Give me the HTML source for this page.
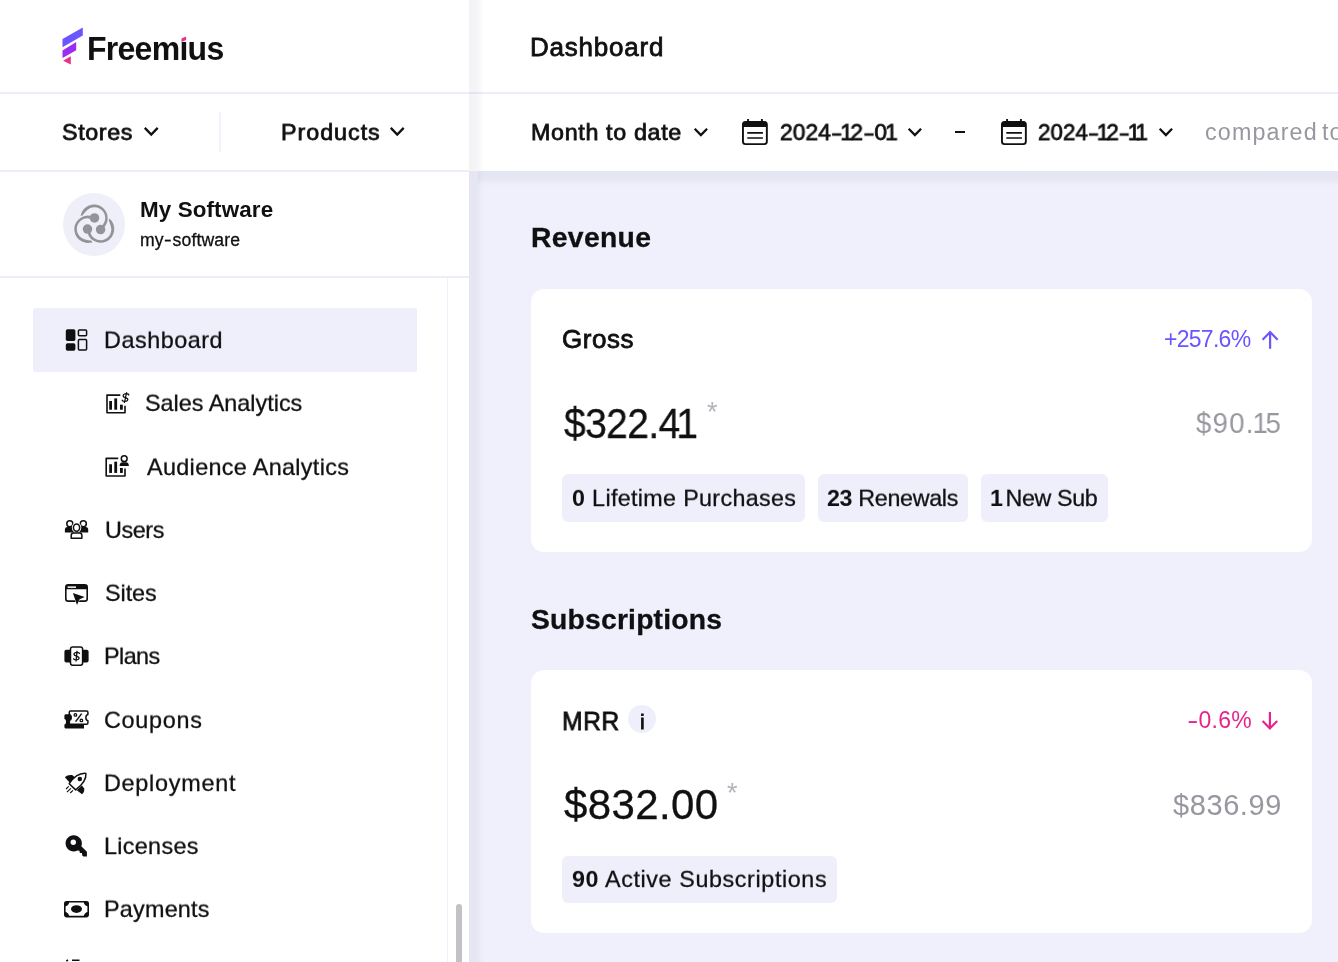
<!DOCTYPE html>
<html lang="en">
<head>
<meta charset="utf-8">
<title>Freemius Dashboard</title>
<style>
*{box-sizing:border-box;margin:0;padding:0}
html,body{width:1338px;height:962px;overflow:hidden;background:#fff}
body{font-family:"Liberation Sans",sans-serif;color:#101012;position:relative}
.abs{position:absolute}
.t{position:absolute;line-height:1;white-space:nowrap;color:#101012;transform-origin:0 50%;transform:skewX(0.03deg);will-change:transform}
.med{-webkit-text-stroke:0.8px currentColor}
.lt{-webkit-text-stroke:0.3px currentColor}
.b{font-weight:bold}
.hb{-webkit-text-stroke:0.3px currentColor}
.sb{font-weight:bold;-webkit-text-stroke:0 currentColor}
.n1{margin:0 -0.13em 0 -0.09em}
.hy{display:inline-block;transform:scaleX(1.45);margin:0 0.08em}
#main{position:absolute;left:469px;top:0;width:869px;height:962px;background:#eff0fb;overflow:hidden}
#mainhead{position:absolute;left:0;top:0;width:869px;height:171px;background:#fff}
#headshadow{position:absolute;left:478px;top:171px;width:860px;height:15px;background:linear-gradient(180deg,rgba(60,60,100,.058) 0,rgba(60,60,100,.052) 50%,rgba(60,60,100,.025) 75%,rgba(60,60,100,0) 100%)}
#sideshadow{position:absolute;left:0;top:0;width:15px;height:962px;background:linear-gradient(90deg,rgba(60,60,100,.058) 0,rgba(60,60,100,.052) 55%,rgba(60,60,100,.025) 78%,rgba(60,60,100,0) 100%)}
.hline{position:absolute;height:1.5px;background:#ededf9}
.vline{position:absolute;width:1.5px;background:#ececf8}
.card{position:absolute;background:#fff;border-radius:13px}
.chip{position:absolute;background:#efeffb;border-radius:6px;height:48px}
svg{position:absolute;overflow:visible}
.ic{fill:none;stroke:#101012;stroke-width:1.6;stroke-linejoin:round;stroke-linecap:butt}
.fl{fill:#101012;stroke:none}
</style>
</head>
<body>
<!-- SIDEBAR -->
<div id="side" class="abs" style="left:0;top:0;width:469px;height:962px;background:#fff;overflow:hidden">
  <svg style="left:0;top:0" width="240" height="92" viewBox="0 0 240 92">
    <polygon points="62.5,39.1 82.8,27.5 82.8,35.5 62.5,47.2" fill="#6a55ff"/>
    <polygon points="62.5,50.5 76.2,42.1 76.2,50.2 62.5,58" fill="#9a2df0"/>
    <polygon points="63.1,60.7 70.8,56.2 70.8,64.5" fill="#e8308c"/>
  </svg>
  <div class="t b" id="logo" style="left:87.10px;top:32.90px;font-size:32px;letter-spacing:-0.729px;color:#101012;transform-origin:0 27.10px;transform:scale(1,1.035) skewX(0.03deg)">Freemius</div>
  <div class="abs" style="left:180px;top:34px;width:8px;height:8.2px;background:#fff"></div>
  <svg style="left:180px;top:34px" width="8" height="9" viewBox="180 34 8 9"><polygon points="181.5,38.4 186.1,36.5 186.1,40.1 181.5,42.0" fill="#e8308c"/></svg>
  <div class="hline" style="left:0;top:92px;width:469px"></div>

  <div class="t med" id="stores" style="left:62.20px;top:121.35px;font-size:23.3px;letter-spacing:0.6px;color:#101012;transform-origin:0 18.65px;transform:scale(1,0.93) skewX(0.03deg)">Stores</div>
  <svg style="left:143.7px;top:126.9px" width="14.5" height="9" viewBox="0 0 14.5 9"><path d="M0.8 0.9 L7.25 7.5 L13.7 0.9" fill="none" stroke="#101012" stroke-width="2.3"/></svg>
  <div class="vline" style="left:219.2px;top:112px;height:40px;background:#f2f2fc"></div>
  <div class="t med" id="products" style="left:281.30px;top:121.35px;font-size:23.3px;letter-spacing:0.971px;color:#101012;transform-origin:0 18.65px;transform:scale(1,0.93) skewX(0.03deg)">Products</div>
  <svg style="left:390.4px;top:126.9px" width="14.5" height="9" viewBox="0 0 14.5 9"><path d="M0.8 0.9 L7.25 7.5 L13.7 0.9" fill="none" stroke="#101012" stroke-width="2.3"/></svg>
  <div class="hline" style="left:0;top:170px;width:469px"></div>

  <div class="abs" style="left:62.5px;top:193px;width:62.5px;height:62.5px;border-radius:50%;background:#efeffa"></div>
  <svg style="left:62.5px;top:193px" width="62.5" height="62.5" viewBox="62.5 193 62.5 62.5" ><g fill="#939399"><circle cx="94.00" cy="217.94" r="4.75"/><path d="M100.43 230.04 A13.7 13.7 0 1 0 80.07 215.73 L82.07 215.40 Q83.71 213.03 86.05 210.78 A10.7 10.7 0 1 1 99.02 227.39 Z"/><circle cx="100.10" cy="229.54" r="4.75"/><path d="M86.41 229.06 A13.7 13.7 0 1 0 108.97 218.58 L108.26 220.47 Q109.49 223.08 110.27 226.23 A10.7 10.7 0 1 1 89.40 229.17 Z"/><circle cx="87.00" cy="229.02" r="4.75"/><path d="M94.26 217.40 A13.7 13.7 0 1 0 92.06 242.18 L90.77 240.62 Q87.90 240.39 84.78 239.49 A10.7 10.7 0 1 1 92.67 219.95 Z"/></g></svg>
  <div class="t b" id="prodname" style="left:140.40px;top:198.90px;font-size:22.4px;letter-spacing:0.12px;color:#101012">My Software</div>
  <div class="t lt" id="prodslug" style="left:140.40px;top:231.80px;font-size:17.6px;letter-spacing:0.14px;color:#101012">my<span class="hy" style="transform:scaleX(1.3)">-</span>software</div>
  <div class="hline" style="left:0;top:276px;width:469px"></div>
  <div class="vline" style="left:447.3px;top:277px;height:700px;width:1.2px;background:#f0f0fa"></div>

  <div class="abs" style="left:33px;top:308.2px;width:383.8px;height:63.5px;background:#efeffb;border-radius:2.5px"></div>
  <svg style="left:64px;top:328px" width="26" height="24" viewBox="64 328 26 24" ><rect class="fl" x="65.8" y="329.3" width="9.6" height="11.7" rx="1.7"/><rect class="fl" x="65.8" y="343.3" width="9.6" height="7.4" rx="1.7"/><rect class="ic" x="78.4" y="330.1" width="8.2" height="5.7" rx="1" style="stroke-width:1.5"/><rect class="ic" x="78.4" y="339.6" width="8.2" height="10.3" rx="1" style="stroke-width:1.5"/></svg><div class="t lt" id="m0" style="left:104.00px;top:329.40px;font-size:23.4px;letter-spacing:0.525px;color:#101012;transform-origin:0 18.60px;transform:scale(1,0.96) skewX(0.03deg)">Dashboard</div>
  <svg style="left:104px;top:390px" width="28" height="26" viewBox="104 390 28 26" ><path class="ic" d="M120.3 395.1 H107 V412.8 H125 V405.8" style="stroke-linejoin:round"/><rect class="fl" x="109.2" y="401.0" width="2.8" height="8.7"/><rect class="fl" x="114.3" y="398.4" width="2.8" height="11.3"/><rect class="fl" x="120.0" y="404.7" width="2.8" height="5.0"/><path d="M128.31 395.46 C128.31 393.13 122.69 393.13 122.69 395.66 C122.69 397.79 128.31 397.41 128.31 399.54 C128.31 402.07 122.69 402.07 122.69 399.74 M125.50 392.20 V403.00" fill="none" stroke="#101012" stroke-width="1.25" stroke-linecap="butt" transform="translate(125.5 397.6) skewX(-12) translate(-125.5 -397.6)"/></svg><div class="t lt" id="m1" style="left:145.40px;top:391.70px;font-size:23.4px;letter-spacing:-0.0px;color:#101012;transform-origin:0 19.30px;transform:scale(1,0.96) skewX(0.03deg)">Sales Analytics</div>
  <svg style="left:104px;top:453px" width="28" height="26" viewBox="104 453 28 26" ><path class="ic" d="M118.2 458.35 H106.2 V476.05 H125 V468.45" style="stroke-linejoin:round"/><rect class="fl" x="109.2" y="464.25" width="2.8" height="8.7"/><rect class="fl" x="114.3" y="461.65" width="2.8" height="11.3"/><rect class="fl" x="120.0" y="467.95" width="2.8" height="5.0"/><circle class="ic" cx="124.2" cy="458.7" r="2.9" style="stroke-width:1.5"/><path class="fl" d="M119.6 466 C119.6 463.2 121 462.2 122.4 462.2 H126 C127.4 462.2 128.9 463.2 128.9 466 Z"/></svg><div class="t lt" id="m2" style="left:146.80px;top:456.00px;font-size:23.4px;letter-spacing:0.329px;color:#101012;transform-origin:0 19.00px;transform:scale(1,0.96) skewX(0.03deg)">Audience Analytics</div>
  <svg style="left:63px;top:519px" width="28" height="22" viewBox="63 519 28 22" ><path class="fl" d="M64.9 532.4 V529.6 C64.9 527.9 66.2 527.1 67.4 527.1 H85.7 C86.9 527.1 88.2 527.9 88.2 529.6 V532.4 Z"/><circle cx="69.8" cy="523.7" r="3.0" fill="#fff" stroke="#101012" stroke-width="1.5"/><circle cx="83.3" cy="523.7" r="3.0" fill="#fff" stroke="#101012" stroke-width="1.5"/><ellipse cx="76.55" cy="527.5" rx="4.7" ry="5.3" fill="#fff"/><ellipse cx="76.55" cy="527.6" rx="3.1" ry="3.7" fill="#fff" stroke="#101012" stroke-width="1.5"/><path d="M71.2 538.2 V535.6 C71.2 533.9 72.3 533.0 73.5 533.0 H79.6 C80.8 533.0 81.9 533.9 81.9 535.6 V538.2 Z" fill="#fff" stroke="#101012" stroke-width="1.5" stroke-linejoin="round"/></svg><div class="t lt" id="m3" style="left:105.00px;top:519.20px;font-size:23.4px;letter-spacing:-0.425px;color:#101012;transform-origin:0 18.80px;transform:scale(1,0.96) skewX(0.03deg)">Users</div>
  <svg style="left:64px;top:583px" width="26" height="24" viewBox="64 583 26 24" ><rect class="ic" x="65.8" y="584.9" width="21.4" height="16.2" rx="2.4" style="stroke-width:1.6"/><path class="fl" d="M65.8 589.2 V587 C65.8 585.6 66.8 584.9 68 584.9 H85 C86.2 584.9 87.2 585.6 87.2 587 V589.2 Z"/><rect x="67.6" y="586.4" width="8.4" height="1.5" fill="#fff"/><path d="M72.9 593 L84.7 597.1 L79.6 599.2 L77 604.9 Z" fill="#101012" stroke="#fff" stroke-width="0.9" stroke-linejoin="round" paint-order="stroke"/></svg><div class="t lt" id="m4" style="left:105.00px;top:582.40px;font-size:23.4px;letter-spacing:-0.075px;color:#101012;transform-origin:0 18.60px;transform:scale(1,0.96) skewX(0.03deg)">Sites</div>
  <svg style="left:63px;top:645px" width="28" height="22" viewBox="63 645 28 22" ><rect class="fl" x="64.4" y="649.8" width="24.2" height="12.6" rx="2"/><rect x="70.5" y="646.9" width="12.1" height="18.4" rx="2.2" fill="#fff" stroke="#101012" stroke-width="1.5"/><path d="M79.31 654.00 C79.31 651.71 73.79 651.71 73.79 654.19 C73.79 656.29 79.31 655.91 79.31 658.01 C79.31 660.49 73.79 660.49 73.79 658.20 M76.55 650.80 V661.40" fill="none" stroke="#101012" stroke-width="1.3" stroke-linecap="butt" transform="translate(76.55 656.1) skewX(-6) translate(-76.55 -656.1)"/></svg><div class="t lt" id="m5" style="left:104.40px;top:644.70px;font-size:23.4px;letter-spacing:-0.575px;color:#101012;transform-origin:0 19.30px;transform:scale(1,0.96) skewX(0.03deg)">Plans</div>
  <svg style="left:63px;top:709px" width="28" height="22" viewBox="63 709 28 22" ><path class="fl" d="M66 714.2 H84 V728.5 H66 C65 728.5 64.4 727.8 64.4 727 V724.6 C66.6 724.3 66.6 719.3 64.4 719 V715.7 C64.4 714.9 65 714.2 66 714.2 Z"/><path d="M70.4 710.9 H86.6 C87.4 710.9 87.9 711.4 87.9 712.2 V714.6 C85.2 715.3 85.2 720.1 87.9 720.8 V723 C87.9 723.8 87.4 724.3 86.6 724.3 H69.3 V720.6 C71.9 719.9 71.9 715.2 69.3 714.5 V712.2 C69.3 711.4 69.7 710.9 70.4 710.9 Z" fill="#fff" stroke="#101012" stroke-width="1.5" stroke-linejoin="round"/><path class="fl" d="M68.6 714.3 C72.6 714.6 72.6 720.6 68.6 720.9 Z"/><path d="M81.7 713.6 L75.6 721.6" fill="none" stroke="#101012" stroke-width="1.5"/><circle cx="75.4" cy="714.9" r="1.3" fill="none" stroke="#101012" stroke-width="1.3"/><circle cx="81.4" cy="720.4" r="1.3" fill="none" stroke="#101012" stroke-width="1.3"/></svg><div class="t lt" id="m6" style="left:104.40px;top:708.90px;font-size:23.4px;letter-spacing:0.717px;color:#101012;transform-origin:0 19.10px;transform:scale(1,0.96) skewX(0.03deg)">Coupons</div>
  <svg style="left:63px;top:772px" width="26" height="24" viewBox="63 772 26 24" ><path class="fl" d="M64.9 777.2 C67 775.2 70.2 774.6 72.9 775.4 L75 777.4 L69.8 782.8 Z"/><path class="fl" d="M82 785.5 L84.2 788.6 C84.6 790.8 83.8 793 82 794.3 L76.8 790.2 Z"/><path d="M85.9 773.4 C86.4 778.5 84 783.6 75.7 789.9 L69.2 783.7 C74.6 775.6 80.4 773 85.9 773.4 Z" fill="#fff" stroke="#101012" stroke-width="1.5" stroke-linejoin="round"/><circle class="fl" cx="79.8" cy="779.1" r="2.25"/><path d="M68.8 786.3 L66.0 789.0 M70.9 788.3 L66.9 792.2 M73 790.3 L70.2 793.0" fill="none" stroke="#101012" stroke-width="1.1"/></svg><div class="t lt" id="m7" style="left:103.90px;top:772.10px;font-size:23.4px;letter-spacing:0.733px;color:#101012;transform-origin:0 18.90px;transform:scale(1,0.96) skewX(0.03deg)">Deployment</div>
  <svg style="left:64px;top:834px" width="26" height="24" viewBox="64 834 26 24" ><path class="fl" d="M73.8 835.2 A8.1 8.1 0 1 0 77.4 850.5 L79.4 850.7 L79.9 852.9 L81.9 853.1 L82.3 855.6 L83.4 856.4 H86.9 V851.7 L81.3 846.3 A8.1 8.1 0 0 0 73.8 835.2 Z"/><circle cx="73.3" cy="842.3" r="2.7" fill="#fff"/></svg><div class="t lt" id="m8" style="left:103.90px;top:835.30px;font-size:23.4px;letter-spacing:0.3px;color:#101012;transform-origin:0 18.70px;transform:scale(1,0.96) skewX(0.03deg)">Licenses</div>
  <svg style="left:63px;top:900px" width="28" height="20" viewBox="63 900 28 20" ><rect x="64.8" y="901.8" width="23.4" height="14.8" rx="2" fill="#fff" stroke="#101012" stroke-width="1.6"/><ellipse class="fl" cx="76.5" cy="909.1" rx="5.5" ry="3.9"/><path class="fl" d="M64.8 901.8 H69.3 A4.5 4.5 0 0 1 64.8 906.3 Z M88.2 901.8 V906.3 A4.5 4.5 0 0 1 83.7 901.8 Z M64.8 916.6 V912.1 A4.5 4.5 0 0 1 69.3 916.6 Z M88.2 916.6 H83.7 A4.5 4.5 0 0 1 88.2 912.1 Z"/></svg><div class="t lt" id="m9" style="left:103.90px;top:897.50px;font-size:23.4px;letter-spacing:0.214px;color:#101012;transform-origin:0 19.50px;transform:scale(1,0.96) skewX(0.03deg)">Payments</div>
  <svg style="left:63px;top:958px" width="28" height="6" viewBox="63 958 28 6" ><path d="M66.3 961 L68 960 M72 960.3 H79.5" fill="none" stroke="#101012" stroke-width="1.6"/></svg>
  <div class="abs" style="left:456.4px;top:903.6px;width:6px;height:70px;background:#c1c1c6;border-radius:3px"></div>
</div>
<!-- MAIN -->
<div id="main"><div class="abs" style="left:-469px;top:0;width:1338px;height:962px">
  <div class="card" style="left:530.6px;top:288.7px;width:781.8px;height:263.4px"></div>
  <div class="card" style="left:530.7px;top:670.3px;width:781.7px;height:263.1px"></div>
  <div id="mainhead" style="left:469px"></div>
  <div id="headshadow"></div>
  <div class="hline" style="left:469px;top:92px;width:869px"></div>
  <div class="t med" id="title" style="left:530.00px;top:33.90px;font-size:26px;letter-spacing:0.787px;color:#101012">Dashboard</div>
  <div class="t med" id="mtd" style="left:531.30px;top:121.05px;font-size:23.3px;letter-spacing:0.65px;color:#101012;transform-origin:0 18.95px;transform:scale(1,0.93) skewX(0.03deg)">Month to date</div>
  <svg style="left:693.6px;top:127.8px" width="13.8" height="8.6" viewBox="0 0 13.8 8.6"><path d="M0.7 0.8 L6.9 7.1 L13.1 0.8" fill="none" stroke="#101012" stroke-width="2.3"/></svg>
  <svg style="left:741.0px;top:117px" width="29" height="30" viewBox="741.0 117 29 30" ><rect x="742.95" y="122.0" width="23.9" height="22.1" rx="2.6" fill="#fff" stroke="#101012" stroke-width="1.9"/><path class="fl" d="M742.95 127 V124.6 C742.95 123 744.2 122 745.6 122 H764.2 C765.6 122 766.85 123 766.85 124.6 V127 Z"/><path d="M748.1 118.9 V123 M761.9 118.9 V123" fill="none" stroke="#101012" stroke-width="1.9"/><path d="M747.3 132.8 H762.9 M747.3 138 H762.9" fill="none" stroke="#101012" stroke-width="1.7"/></svg>
  <div class="t med" id="d1" style="left:779.52px;top:121.05px;font-size:23.3px;letter-spacing:0.075px;color:#101012;transform-origin:0 18.95px;transform:scale(0.98,0.93) skewX(0.03deg)">2024<span class="hy">-</span><span class="n1">1</span>2<span class="hy">-</span>0<span class="n1">1</span></div>
  <svg style="left:908.4px;top:127.8px" width="13.8" height="8.6" viewBox="0 0 13.8 8.6"><path d="M0.7 0.8 L6.9 7.1 L13.1 0.8" fill="none" stroke="#101012" stroke-width="2.3"/></svg>
  <div class="abs" style="left:955px;top:130.8px;width:10px;height:2px;background:#101012"></div>
  <svg style="left:999.8px;top:117px" width="29" height="30" viewBox="999.8 117 29 30" ><rect x="1001.75" y="122.0" width="23.9" height="22.1" rx="2.6" fill="#fff" stroke="#101012" stroke-width="1.9"/><path class="fl" d="M1001.75 127 V124.6 C1001.75 123 1003.0 122 1004.4 122 H1023.0 C1024.3999999999999 122 1025.6499999999999 123 1025.6499999999999 124.6 V127 Z"/><path d="M1006.9 118.9 V123 M1020.6999999999999 118.9 V123" fill="none" stroke="#101012" stroke-width="1.9"/><path d="M1006.0999999999999 132.8 H1021.6999999999999 M1006.0999999999999 138 H1021.6999999999999" fill="none" stroke="#101012" stroke-width="1.7"/></svg>
  <div class="t med" id="d2" style="left:1038.34px;top:121.05px;font-size:23.3px;letter-spacing:0.002px;color:#101012;transform-origin:0 18.95px;transform:scale(0.96,0.93) skewX(0.03deg)">2024<span class="hy">-</span><span class="n1">1</span>2<span class="hy">-</span><span class="n1">1</span><span class="n1">1</span></div>
  <svg style="left:1159.1px;top:127.8px" width="13.8" height="8.6" viewBox="0 0 13.8 8.6"><path d="M0.7 0.8 L6.9 7.1 L13.1 0.8" fill="none" stroke="#101012" stroke-width="2.3"/></svg>
  <div class="t " id="cmp" style="left:1205.00px;top:121.05px;font-size:23.3px;letter-spacing:1.15px;color:#97979f">compared<span style="margin-left:-3.5px"> </span>to</div>

  <div class="t b hb" id="rev" style="left:530.90px;top:222.55px;font-size:28.3px;letter-spacing:0.333px;color:#101012">Revenue</div>
  <div class="t med" id="gross" style="left:562.20px;top:325.70px;font-size:26px;letter-spacing:0.525px;color:#101012">Gross</div>
  <div class="t " id="pct1" style="left:1163.90px;top:327.60px;font-size:23px;letter-spacing:-0.717px;color:#6a55ff">+257.6%</div>
  <svg style="left:1261px;top:329.5px" width="18" height="20" viewBox="1261 329.5 18 20"><path d="M1270.1 348.2 V331.6 M1262.6 339.2 L1270.1 331.6 L1277.6 339.2" fill="none" stroke="#6a55ff" stroke-width="2.2"/></svg>
  <div class="t lt" id="big1" style="left:564.20px;top:403.00px;font-size:42px;letter-spacing:-0.677px;color:#101012;transform-origin:0 35.00px;transform:scale(0.93,1) skewX(0.03deg)">$322.4<span class="n1">1</span></div>
  <div class="t" id="ast1" style="left:706.7px;top:399.2px;font-size:27px;color:#b4b4bc">*</div>
  <div class="t " id="prev1" style="left:1196.45px;top:408.80px;font-size:29px;letter-spacing:1.389px;color:#97979f;transform-origin:0 24.20px;transform:scale(0.95,1) skewX(0.03deg)">$90.<span class="n1">1</span>5</div>
  <div class="chip" style="left:562.3px;top:474px;width:242.7px"></div>
  <div class="chip" style="left:817.7px;top:474px;width:150.3px"></div>
  <div class="chip" style="left:981.1px;top:474px;width:126.6px"></div>
  <div class="t lt" id="c1" style="left:571.80px;top:487.15px;font-size:23.3px;letter-spacing:0.337px;color:#101012;transform-origin:0 18.85px;transform:scale(1,0.95) skewX(0.03deg)"><b class="sb">0</b> Lifetime Purchases</div>
  <div class="t lt" id="c2" style="left:826.90px;top:487.15px;font-size:23.3px;letter-spacing:-0.34px;color:#101012;transform-origin:0 18.85px;transform:scale(1,0.95) skewX(0.03deg)"><b class="sb">23</b> Renewals</div>
  <div class="t lt" id="c3" style="left:991.50px;top:487.15px;font-size:23.3px;letter-spacing:-0.4px;color:#101012;transform-origin:0 18.85px;transform:scale(1,0.95) skewX(0.03deg)"><b class="sb"><span class="n1">1</span></b> New Sub</div>

  <div class="t b hb" id="subs" style="left:531.00px;top:604.75px;font-size:28.3px;letter-spacing:0.192px;color:#101012">Subscriptions</div>
  <div class="t med" id="mrr" style="left:561.85px;top:707.50px;font-size:26px;letter-spacing:0.553px;color:#101012;transform-origin:0 22.50px;transform:scale(0.95,1) skewX(0.03deg)">MRR</div>
  <div class="abs" style="left:628.2px;top:705.1px;width:28px;height:28px;border-radius:50%;background:#efeffb"></div>
  <div class="t med" id="info" style="left:639.5px;top:711.2px;font-size:21px">i</div>
  <div class="t " id="pct2" style="left:1187.00px;top:708.80px;font-size:23px;letter-spacing:0.225px;color:#e6248c"><span class="hy">-</span>0.6%</div>
  <svg style="left:1261px;top:711px" width="18" height="20" viewBox="1261 711 18 20"><path d="M1269.9 712.1 V728.2 M1262.6 721.0 L1269.9 728.4 L1277.2 721.0" fill="none" stroke="#e6248c" stroke-width="2.2"/></svg>
  <div class="t lt" id="big2" style="left:564.20px;top:784.10px;font-size:42px;letter-spacing:0.367px;color:#101012">$832.00</div>
  <div class="t" id="ast2" style="left:726.7px;top:780.2px;font-size:27px;color:#b4b4bc">*</div>
  <div class="t " id="prev2" style="left:1172.50px;top:791.40px;font-size:29px;letter-spacing:0.583px;color:#97979f">$836.99</div>
  <div class="chip" style="left:562.3px;top:855.8px;width:274.5px;height:47px"></div>
  <div class="t lt" id="c4" style="left:571.50px;top:867.55px;font-size:23.3px;letter-spacing:0.623px;color:#101012;transform-origin:0 19.45px;transform:scale(1,0.95) skewX(0.03deg)"><b class="sb">90</b> Active Subscriptions</div>
  <div id="sideshadow" style="left:469px"></div>
</div></div>
</body>
</html>
